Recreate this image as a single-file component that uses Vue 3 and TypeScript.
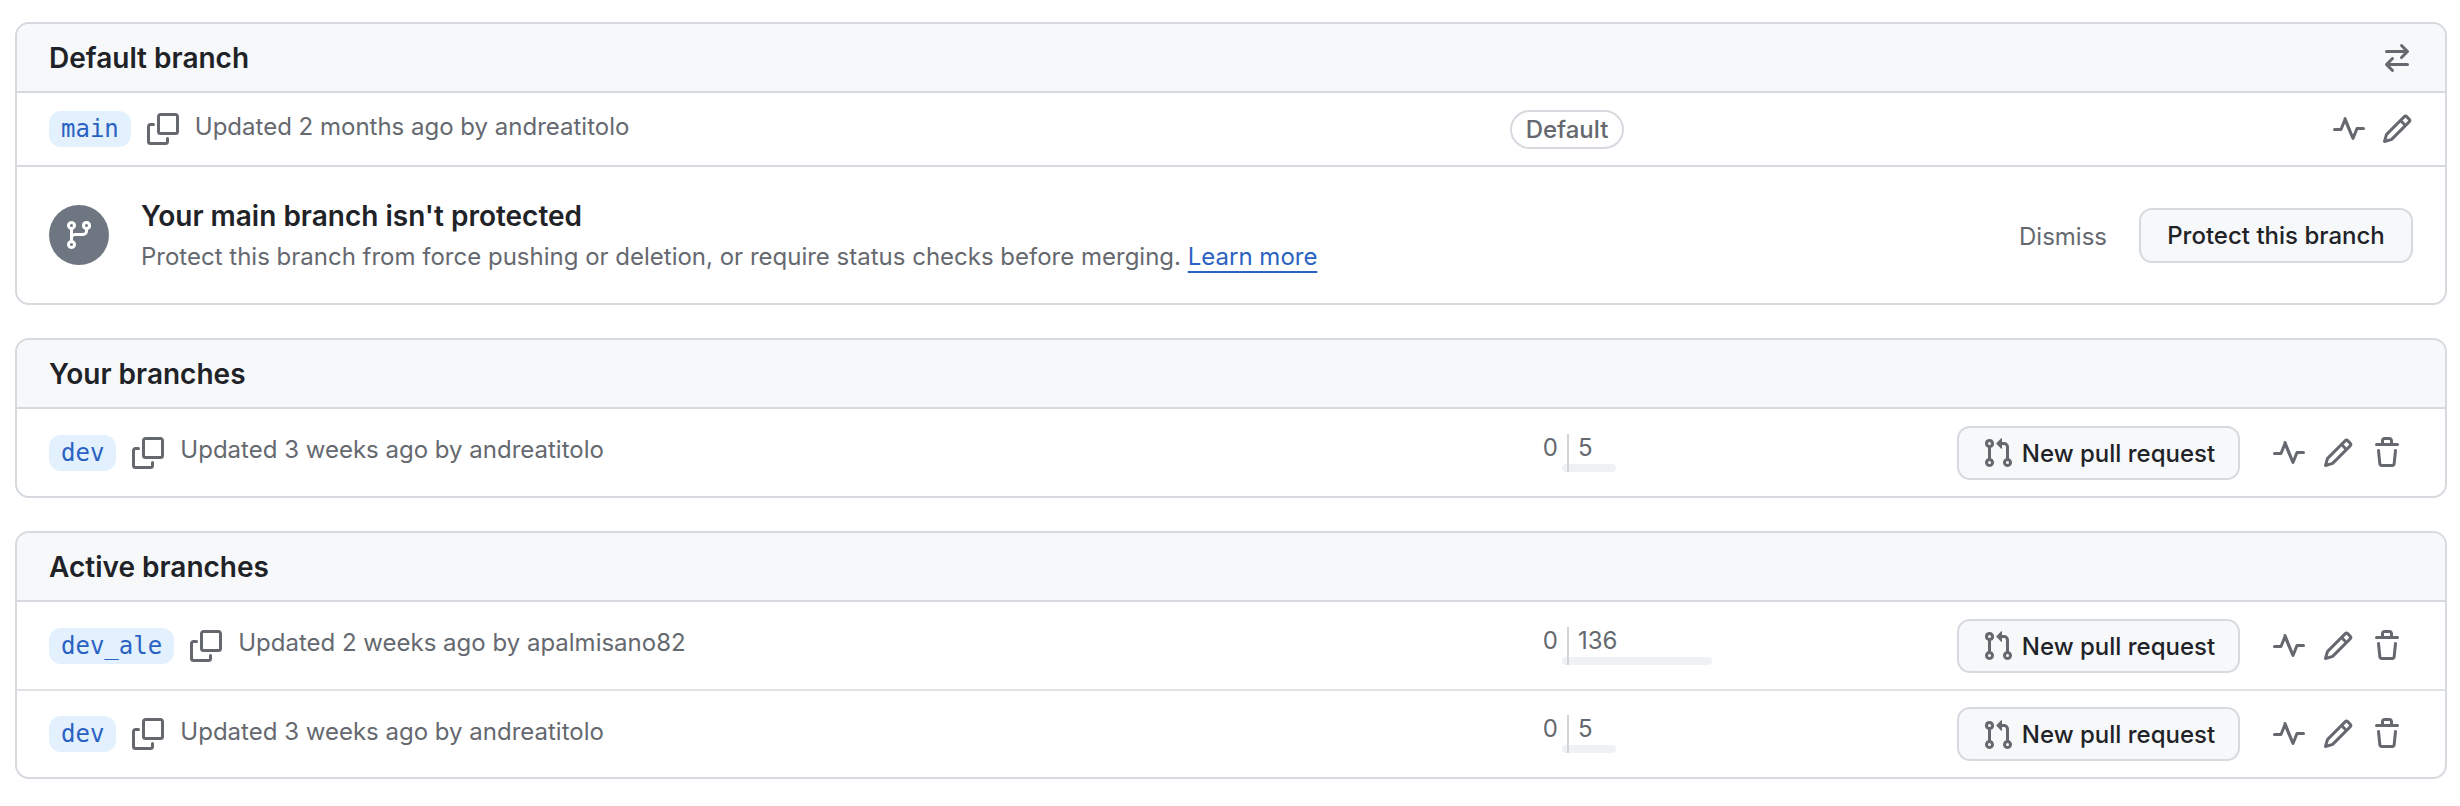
<script setup lang="ts">
interface Branch {
  name: string
  when: string
  author: string
  ahead: number
  behind: number
  barWidth: number
}

const icons = {
  copy: 'M0 6.75C0 5.784.784 5 1.75 5h1.5a.75.75 0 0 1 0 1.5h-1.5a.25.25 0 0 0-.25.25v7.5c0 .138.112.25.25.25h7.5a.25.25 0 0 0 .25-.25v-1.5a.75.75 0 0 1 1.5 0v1.5A1.75 1.75 0 0 1 9.25 16h-7.5A1.75 1.75 0 0 1 0 14.25ZM5 1.75C5 .784 5.784 0 6.75 0h7.5C15.216 0 16 .784 16 1.75v7.5A1.75 1.75 0 0 1 14.25 11h-7.5A1.75 1.75 0 0 1 5 9.25Zm1.75-.25a.25.25 0 0 0-.25.25v7.5c0 .138.112.25.25.25h7.5a.25.25 0 0 0 .25-.25v-7.5a.25.25 0 0 0-.25-.25Z',
  pencil: 'M11.013 1.427a1.75 1.75 0 0 1 2.474 0l1.086 1.086a1.75 1.75 0 0 1 0 2.474l-8.61 8.61c-.21.21-.47.364-.756.445l-3.251.93a.75.75 0 0 1-.927-.928l.929-3.25c.081-.286.235-.547.445-.758l8.61-8.61Zm.176 4.823L9.75 4.81l-6.286 6.287a.253.253 0 0 0-.064.108l-.558 1.953 1.953-.558a.253.253 0 0 0 .108-.064Zm1.238-3.763a.25.25 0 0 0-.354 0L10.811 3.75l1.439 1.44 1.263-1.263a.25.25 0 0 0 0-.354Z',
  trash: 'M11 1.75V3h2.25a.75.75 0 0 1 0 1.5H2.75a.75.75 0 0 1 0-1.5H5V1.75C5 .784 5.784 0 6.75 0h2.5C10.216 0 11 .784 11 1.75ZM4.496 6.675l.66 6.6a.25.25 0 0 0 .249.225h5.19a.25.25 0 0 0 .249-.225l.66-6.6a.75.75 0 0 1 1.492.149l-.66 6.6A1.748 1.748 0 0 1 10.595 15h-5.19a1.75 1.75 0 0 1-1.741-1.575l-.66-6.6a.75.75 0 1 1 1.492-.15ZM6.5 1.75V3h3V1.75a.25.25 0 0 0-.25-.25h-2.5a.25.25 0 0 0-.25.25Z',
  pulse: 'M6 2c.306 0 .582.187.696.471L10 10.731l1.304-3.26A.751.751 0 0 1 12 7h3.25a.75.75 0 0 1 0 1.5h-2.742l-1.812 4.528a.751.751 0 0 1-1.392 0L6 5.269 4.696 8.53A.75.75 0 0 1 4 9H.75a.75.75 0 0 1 0-1.5h2.742l1.812-4.529A.751.751 0 0 1 6 2Z',
  pull: 'M1.5 3.25a2.25 2.25 0 1 1 3 2.122v5.256a2.251 2.251 0 1 1-1.5 0V5.372A2.25 2.25 0 0 1 1.5 3.25Zm5.677-.177L9.573.677A.25.25 0 0 1 10 .854V2.5h1A2.5 2.5 0 0 1 13.5 5v5.628a2.251 2.251 0 1 1-1.5 0V5a1 1 0 0 0-1-1h-1v1.646a.25.25 0 0 1-.427.177L7.177 3.427a.25.25 0 0 1 0-.354ZM3.75 2.5a.75.75 0 1 0 0 1.5.75.75 0 0 0 0-1.5Zm0 9.5a.75.75 0 1 0 0 1.5.75.75 0 0 0 0-1.5Zm8.25.75a.75.75 0 1 0 1.5 0 .75.75 0 0 0-1.5 0Z',
  swap: 'M5.22 14.78a.75.75 0 0 0 1.06-1.06L4.56 12h8.69a.75.75 0 0 0 0-1.5H4.56l1.72-1.72a.75.75 0 0 0-1.06-1.06l-3 3a.75.75 0 0 0 0 1.06l3 3Zm5.56-6.5a.75.75 0 1 1-1.06-1.06l1.72-1.72H2.75a.75.75 0 0 1 0-1.5h8.69L9.72 2.28a.75.75 0 0 1 1.06-1.06l3 3a.75.75 0 0 1 0 1.06l-3 3Z',
  branch: 'M9.5 3.25a2.25 2.25 0 1 1 3 2.122V6A2.5 2.5 0 0 1 10 8.5H6a1 1 0 0 0-1 1v1.128a2.251 2.251 0 1 1-1.5 0V5.372a2.25 2.25 0 1 1 1.5 0v1.836A2.493 2.493 0 0 1 6 7h4a1 1 0 0 0 1-1v-.628A2.25 2.25 0 0 1 9.5 3.25Zm-6 0a.75.75 0 1 0 1.5 0 .75.75 0 0 0-1.5 0Zm8.25-.75a.75.75 0 1 0 0 1.5.75.75 0 0 0 0-1.5ZM4.25 12a.75.75 0 1 0 0 1.5.75.75 0 0 0 0-1.5Z',
}

const dev: Branch = { name: 'dev', when: '3 weeks ago', author: 'andreatitolo', ahead: 0, behind: 5, barWidth: 47 }
const devAle: Branch = { name: 'dev_ale', when: '2 weeks ago', author: 'apalmisano82', ahead: 0, behind: 136, barWidth: 143 }

const sections = [
  { title: 'Your branches', branches: [dev] },
  { title: 'Active branches', branches: [devAle, dev] },
]
</script>

<template>
  <main class="page">
    <section class="card">
      <header class="card__head">
        <h2>Default branch</h2>
        <svg class="icon" viewBox="0 0 16 16"><path :d="icons.swap" /></svg>
      </header>
      <div class="row row--default">
        <div class="row__name">
          <a class="label">main</a>
          <svg class="icon icon--copy" viewBox="0 0 16 16"><path :d="icons.copy" /></svg>
          <span class="updated">Updated 2 months ago by andreatitolo</span>
        </div>
        <div class="stats stats--badge"><span class="badge">Default</span></div>
        <div class="row__actions row__actions--tight">
          <svg class="icon" viewBox="0 0 16 16"><path :d="icons.pulse" /></svg>
          <svg class="icon" viewBox="0 0 16 16"><path :d="icons.pencil" /></svg>
        </div>
      </div>
      <div class="notice">
        <span class="notice__circle">
          <svg class="icon icon--white" viewBox="0 0 16 16"><path :d="icons.branch" /></svg>
        </span>
        <div class="notice__text">
          <strong>Your main branch isn't protected</strong>
          <p>Protect this branch from force pushing or deletion, or require status checks before merging. <a>Learn more</a></p>
        </div>
        <span class="dismiss">Dismiss</span>
        <button class="btn btn--protect">Protect this branch</button>
      </div>
    </section>

    <section v-for="section in sections" :key="section.title" class="card">
      <header class="card__head">
        <h2>{{ section.title }}</h2>
      </header>
      <div v-for="branch in section.branches" :key="branch.name" class="row row--branch">
        <div class="row__name">
          <a class="label">{{ branch.name }}</a>
          <svg class="icon icon--copy" viewBox="0 0 16 16"><path :d="icons.copy" /></svg>
          <span class="updated">Updated {{ branch.when }} by {{ branch.author }}</span>
        </div>
        <div class="stats">
          <div class="stats__ahead">
            <span>{{ branch.ahead }}</span>
            <i class="stats__bar stats__bar--ahead"></i>
          </div>
          <div class="stats__behind">
            <span>{{ branch.behind }}</span>
            <i class="stats__bar stats__bar--behind" :style="{ width: branch.barWidth + 'px' }"></i>
          </div>
        </div>
        <div class="row__actions">
          <button class="btn btn--pull">
            <svg class="icon" viewBox="0 0 16 16"><path :d="icons.pull" /></svg>
            New pull request
          </button>
          <div class="row__icons">
            <svg class="icon" viewBox="0 0 16 16"><path :d="icons.pulse" /></svg>
            <svg class="icon" viewBox="0 0 16 16"><path :d="icons.pencil" /></svg>
            <svg class="icon" viewBox="0 0 16 16"><path :d="icons.trash" /></svg>
          </div>
        </div>
      </div>
    </section>
  </main>
</template>

<style scoped>
.page {
  display: flex;
  flex-direction: column;
  gap: 33px;
  padding: 22px 13px 0 15px;
  font-family: Inter, "Liberation Sans", sans-serif;
  font-size: 24px;
  color: #1f2328;
}

.card {
  border: 2px solid #d6dade;
  border-radius: 14px;
  overflow: hidden;
}

.card__head {
  display: flex;
  align-items: center;
  justify-content: space-between;
  box-sizing: border-box;
  height: 69px;
  padding: 0 32px;
  background: #f6f8fa;
  border-bottom: 2px solid #d6dade;
}

.card__head h2 {
  margin: 0;
  font-size: 28px;
  font-weight: 600;
}

.row {
  display: grid;
  grid-template-columns: 1fr 500px 456px;
  align-items: center;
  box-sizing: border-box;
  padding: 0 32px;
}

.row--default {
  height: 74px;
  border-bottom: 2px solid #d6dade;
}

.row--branch {
  height: 87px;
}

.row--branch + .row--branch {
  border-top: 2px solid #dfe3e6;
  height: 88px;
}

.row__name {
  display: flex;
  align-items: center;
  gap: 16px;
  min-width: 0;
}

.label {
  padding: 0 12px;
  height: 36px;
  line-height: 36px;
  border-radius: 12px;
  background: #e3f0fd;
  color: #2a62c2;
  font-family: "DejaVu Sans Mono", "Liberation Mono", monospace;
  font-size: 24px;
}

.updated {
  color: #65696f;
  margin-top: -6px;
}

.icon {
  display: block;
  width: 32px;
  height: 32px;
  fill: #65696f;
  flex: none;
}

.icon--white {
  fill: #fff;
}

.stats {
  display: grid;
  grid-template-columns: 110px 1fr;
  height: 38px;
  color: #65696f;
  line-height: 28px;
}

.stats--badge {
  display: flex;
  align-items: center;
  height: auto;
  margin-top: 1px;
  padding-left: 53px;
}

.badge {
  box-sizing: border-box;
  width: 114px;
  height: 39px;
  line-height: 35px;
  text-align: center;
  border: 2px solid #d6dade;
  border-radius: 20px;
  font-size: 24px;
  font-weight: 500;
}

.stats__ahead {
  display: flex;
  flex-direction: column;
  align-items: flex-end;
  padding-right: 9px;
}

.stats__behind {
  display: flex;
  flex-direction: column;
  align-items: flex-start;
  padding-left: 9px;
  border-left: 2px solid #d0d5da;
}

.stats__bar {
  display: block;
  height: 8px;
  margin-top: 2px;
  background: #eff1f3;
}

.stats__bar--ahead {
  width: 5px;
  margin-right: -9px;
  border-radius: 4px 0 0 4px;
}

.stats__bar--behind {
  margin-left: -9px;
  border-radius: 0 4px 4px 0;
}

.row__actions {
  display: flex;
  align-items: center;
  justify-content: flex-end;
  gap: 33px;
}

.row__actions--tight {
  gap: 16px;
}

.row__icons {
  display: flex;
  gap: 17px;
  padding-right: 10px;
}

.btn {
  display: flex;
  align-items: center;
  justify-content: center;
  box-sizing: border-box;
  height: 54px;
  padding: 1px 0 0;
  border: 2px solid #d6dade;
  border-radius: 13px;
  background: #f6f8fa;
  color: #1f2328;
  font-family: inherit;
  font-size: 24px;
  font-weight: 500;
}

.btn--pull {
  width: 285px;
  gap: 8px;
}

.btn--protect {
  width: 274px;
  height: 55px;
}

.notice {
  display: flex;
  align-items: center;
  height: 136px;
  padding: 0 32px;
}

.notice__circle {
  display: flex;
  align-items: center;
  justify-content: center;
  width: 60px;
  height: 60px;
  border-radius: 50%;
  background: #6e7781;
  margin-right: 32px;
  flex: none;
}

.notice__text {
  flex: 1;
  padding-top: 3px;
}

.notice__text strong {
  display: block;
  font-size: 28px;
  font-weight: 600;
  line-height: 34px;
}

.notice__text p {
  margin: 7px 0 0;
  color: #65696f;
  line-height: 34px;
}

.notice__text a {
  color: #2a62c2;
  text-decoration: underline;
  text-decoration-thickness: 2px;
  text-underline-offset: 6px;
}

.dismiss {
  color: #65696f;
  margin: 2px 32px 0 0;
}
</style>
